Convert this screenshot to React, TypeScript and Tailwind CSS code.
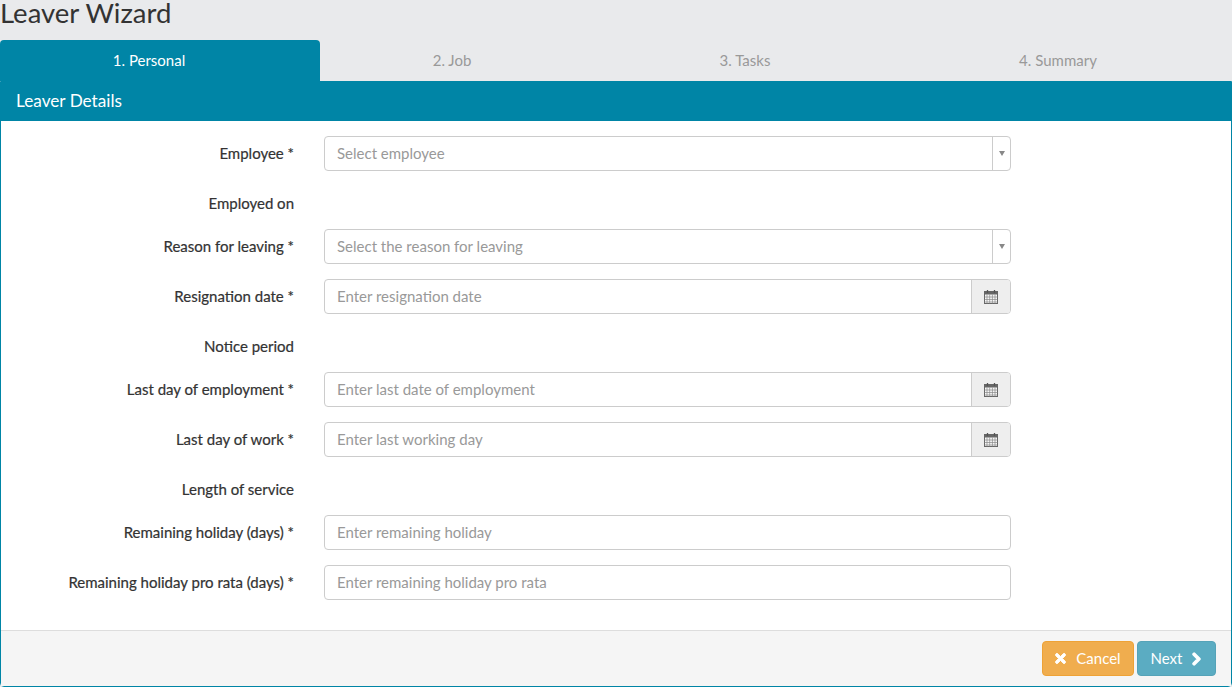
import React from 'react';
import { FaTimes, FaChevronRight } from 'react-icons/fa';

const tabs = [
  { label: '1. Personal', width: 'w-[320px]', active: true },
  { label: '2. Job', width: 'w-[286px]', active: false },
  { label: '3. Tasks', width: 'w-[300px]', active: false },
  { label: '4. Summary', width: 'w-[326px]', active: false },
];

function CalendarIcon() {
  return (
    <svg width="14" height="14" viewBox="0 0 14 14" fill="none" stroke="#666" strokeWidth="1">
      <rect x="0.5" y="1.5" width="13" height="12" fill="#f7f7f7" />
      <rect x="0.5" y="2" width="13" height="2" fill="#666" />
      <path d="M0.5 7h13M0.5 9.5h13M0.5 12h13M3 4.5v9M5.7 4.5v9M8.4 4.5v9M11 4.5v9" strokeWidth="0.7" stroke="#888" />
      <path d="M3.5 0v3M10.5 0v3" strokeWidth="1.3" stroke="#555" />
    </svg>
  );
}

function Row({ label, children }: { label: string; children?: React.ReactNode }) {
  return (
    <div className="flex items-center mb-[15px]">
      <label className="w-[294px] pb-[2px] text-right text-[15px] leading-5 text-[#333] [-webkit-text-stroke:0.2px_#333]">
        {label}
      </label>
      <div className="ml-[30px] w-[687px]">{children}</div>
    </div>
  );
}

function StaticRow({ label }: { label: string }) {
  return (
    <div className="flex items-start h-[28px] mb-[15px]">
      <label className="w-[294px] pt-[7px] text-right text-[15px] leading-5 text-[#333] [-webkit-text-stroke:0.2px_#333]">
        {label}
      </label>
    </div>
  );
}

function TextInput({ placeholder }: { placeholder: string }) {
  return (
    <input
      placeholder={placeholder}
      className="w-full h-[35px] px-3 pb-[2px] text-[15px] text-[#555] placeholder:text-[#999] bg-white border border-[#ccc] rounded-[4px] outline-none"
    />
  );
}

function SelectInput({ placeholder }: { placeholder: string }) {
  return (
    <div className="flex h-[35px] bg-white border border-[#ccc] rounded-[4px]">
      <div className="flex-1 flex items-center px-3 text-[15px] text-[#999]">{placeholder}</div>
      <div className="w-[18px] border-l border-[#ccc] flex items-center justify-center">
        <span className="w-0 h-0 border-x-[3px] border-x-transparent border-t-[5px] border-t-[#888]" />
      </div>
    </div>
  );
}

function DateInput({ placeholder }: { placeholder: string }) {
  return (
    <div className="flex h-[35px] bg-white border border-[#ccc] rounded-[4px] overflow-hidden">
      <input
        placeholder={placeholder}
        className="flex-1 min-w-0 px-3 text-[15px] text-[#555] placeholder:text-[#999] outline-none"
      />
      <div className="w-[39px] bg-[#eee] border-l border-[#ccc] flex items-center justify-center">
        <CalendarIcon />
      </div>
    </div>
  );
}

export default function App() {
  return (
    <div className="h-[687px] bg-[#e9eaec] overflow-hidden font-['Lato','Open_Sans',sans-serif]">
      <h1 className="h-[40px] text-[27.5px] leading-[25px] text-[#333]">Leaver Wizard</h1>

      <div className="flex h-[41px]">
        {tabs.map((tab) => (
          <div
            key={tab.label}
            className={`${tab.width} pr-[22px] flex items-center justify-center text-[15px] ${
              tab.active ? 'bg-[#0085a6] text-white rounded-t-[4px]' : 'text-[#999]'
            }`}
          >
            {tab.label}
          </div>
        ))}
      </div>

      <div className="h-[606px] flex flex-col bg-white border border-[#0085a6] rounded-b-[4px]">
        <div className="h-[39px] -mx-px px-4 pb-[2px] bg-[#0085a6] text-white text-[17.2px] flex items-center">Leaver Details</div>

        <div className="flex-1 pt-[15px] -ml-px">
          <Row label="Employee *"><SelectInput placeholder="Select employee" /></Row>
          <StaticRow label="Employed on" />
          <Row label="Reason for leaving *"><SelectInput placeholder="Select the reason for leaving" /></Row>
          <Row label="Resignation date *"><DateInput placeholder="Enter resignation date" /></Row>
          <StaticRow label="Notice period" />
          <Row label="Last day of employment *"><DateInput placeholder="Enter last date of employment" /></Row>
          <Row label="Last day of work *"><DateInput placeholder="Enter last working day" /></Row>
          <StaticRow label="Length of service" />
          <Row label="Remaining holiday (days) *"><TextInput placeholder="Enter remaining holiday" /></Row>
          <Row label="Remaining holiday pro rata (days) *"><TextInput placeholder="Enter remaining holiday pro rata" /></Row>
        </div>

        <div className="h-[56px] bg-[#f5f5f5] border-t border-[#ddd] flex items-start justify-end gap-[3px] pt-[10px] pr-[15px]">
          <button className="h-[35px] w-[92px] flex items-center justify-center gap-[10px] bg-[#f0ad4e] border border-[#eea236] rounded-[4px] text-white text-[15px]">
            <FaTimes className="w-[11px] h-[15px]" strokeWidth={30} />
            Cancel
          </button>
          <button className="h-[35px] w-[79px] flex items-center justify-center gap-[9px] bg-[#5bacc2] border border-[#55a3b8] rounded-[4px] text-white text-[15px]">
            Next
            <FaChevronRight className="w-[11px] h-[14px]" strokeWidth={50} />
          </button>
        </div>
      </div>
    </div>
  );
}
